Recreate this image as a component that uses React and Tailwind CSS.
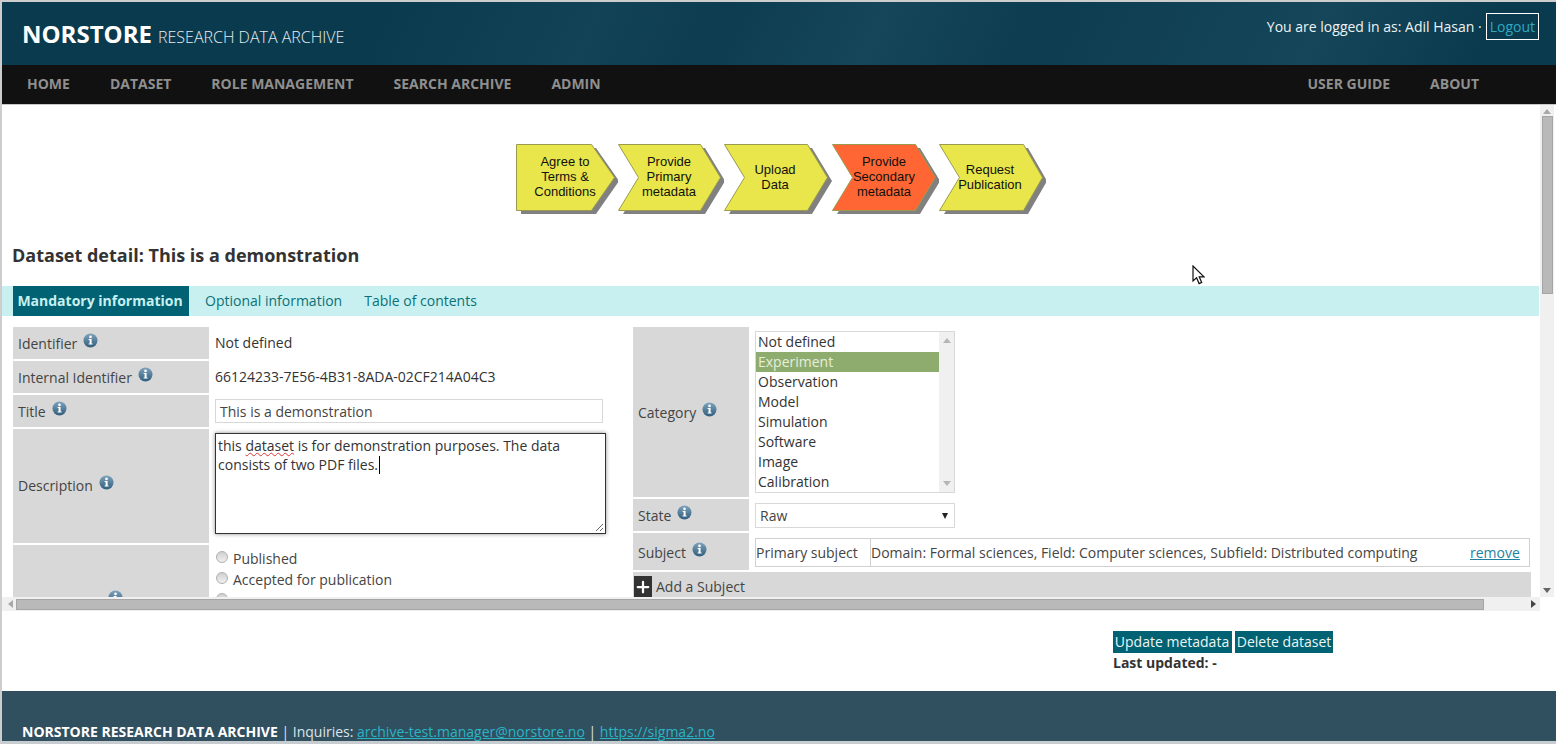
import { Plus } from "lucide-react";

const steps = [
  { lines: ["Agree to", "Terms &", "Conditions"], color: "#e8e64a", points: "0,0 75,0 98,33 75,66 0,66", w: 102, pad: "pr-[4px]" },
  { lines: ["Provide", "Primary", "metadata"], color: "#e8e64a", points: "0,0 82,0 102,33 82,66 0,66 20,33", w: 106, pad: "pr-[4px]" },
  { lines: ["Upload", "Data"], color: "#e8e64a", points: "0,0 83,0 103,33 83,66 0,66 20,33", w: 108, pad: "pr-[6px]" },
  { lines: ["Provide", "Secondary", "metadata"], color: "#ff6633", points: "0,0 83,0 103,33 83,66 0,66 20,33", w: 107, pad: "pr-[3px]" },
  { lines: ["Request", "Publication"], color: "#e8e64a", points: "0,0 84,0 103,33 84,66 0,66 20,33", w: 107, pad: "pr-[5px]" },
];

const categories = ["Not defined", "Experiment", "Observation", "Model", "Simulation", "Software", "Image", "Calibration"];

function InfoIcon() {
  return (
    <svg width="15" height="15" viewBox="0 0 15 15" className="ml-[6px] shrink-0 -translate-y-[3px]">
      <defs>
        <linearGradient id="infoFill" x1="0" y1="0" x2="0" y2="1">
          <stop offset="0" stopColor="#7fa3bd" />
          <stop offset="1" stopColor="#2f5d7c" />
        </linearGradient>
      </defs>
      <circle cx="7.5" cy="7.5" r="7" fill="url(#infoFill)" />
      <circle cx="7.5" cy="3.9" r="1.3" fill="#fff" />
      <path d="M5.6 6h3v4.4h1v1.1H5.6v-1.1h1V7.1h-1z" fill="#fff" />
    </svg>
  );
}

function Label({ children, className }) {
  return (
    <div className={`flex items-center bg-[#d8d8d8] pl-[5px] text-[#444] ${className}`}>
      {children}
      <InfoIcon />
    </div>
  );
}

function Radio({ label }) {
  return (
    <div className="flex h-[21px] items-center">
      <span className="mb-[3px] ml-[2px] h-[12px] w-[12px] rounded-full border border-[#b0b0b0] bg-[linear-gradient(#d0d0d0,#f0f0f0)]" />
      <span className="ml-[5px] text-[#444]">{label}</span>
    </div>
  );
}

function Step({ step }) {
  return (
    <div className="relative h-[70px]" style={{ width: step.w }}>
      <svg width={step.w} height="70" className="absolute left-0 top-0">
        <polygon points={step.points} transform="translate(5 4)" fill="#808080" />
        <polygon points={step.points} transform="translate(0.5 0.5)" fill={step.color} stroke="#9a9a50" strokeWidth="1" />
      </svg>
      <div className={`relative flex h-[66px] flex-col items-center justify-center pt-[1px] text-center font-['Liberation_Sans',sans-serif] text-[13px] leading-[14.8px] text-[#111] ${step.pad}`}>
        {step.lines.map((line) => (
          <span key={line}>{line}</span>
        ))}
      </div>
    </div>
  );
}

function LeftColumn() {
  return (
    <div className="flex w-[600px] flex-col gap-[2px]">
      <div className="flex">
        <Label className="h-[32px] w-[196px]">Identifier</Label>
        <div className="flex items-center pb-[2px] pl-[6px] text-[#333]">Not defined</div>
      </div>
      <div className="flex">
        <Label className="h-[32px] w-[196px]">Internal Identifier</Label>
        <div className="flex items-center pb-[2px] pl-[6px] text-[#333]">66124233-7E56-4B31-8ADA-02CF214A04C3</div>
      </div>
      <div className="flex">
        <Label className="h-[32px] w-[196px]">Title</Label>
        <div className="flex items-center pl-[6px]">
          <div className="flex h-[24px] w-[388px] items-center border border-[#d8d8d8] pl-[4px] text-[#444]">This is a demonstration</div>
        </div>
      </div>
      <div className="flex">
        <Label className="h-[114px] w-[196px] pb-[2px]">Description</Label>
        <div className="pl-[6px] pt-[4px]">
          <div className="relative h-[101px] w-[391px] border border-[#333] pl-[2px] pt-[2px] leading-[19px] text-[#333] shadow-[0_0_4px_rgba(0,0,0,0.45)]">
            this <span className="underline decoration-[#d33] decoration-wavy decoration-1">dataset</span> is for demonstration purposes. The data
            <br />
            consists of two PDF files.<span className="ml-[1px] inline-block h-[18px] w-px bg-black align-text-bottom" />
            <svg width="9" height="9" viewBox="0 0 9 9" className="absolute bottom-[1px] right-[1px]">
              <path d="M1 8 8 1M5 8l3-3" stroke="#666" strokeWidth="1" />
            </svg>
          </div>
        </div>
      </div>
      <div className="flex">
        <Label className="h-[110px] w-[196px]">
          <span className="mr-[2px] translate-y-[2px]">Review state</span>
        </Label>
        <div className="pl-[1px] pt-[3px]">
          <div className="pl-[4px]">
            <Radio label="Published" />
            <Radio label="Accepted for publication" />
            <Radio label="" />
          </div>
        </div>
      </div>
    </div>
  );
}

function RightColumn() {
  return (
    <div className="ml-[20px] flex w-[898px] flex-col gap-[2px]">
      <div className="flex">
        <Label className="h-[170px] w-[116px]">Category</Label>
        <div className="pl-[6px] pt-[4px]">
          <div className="flex h-[162px] w-[200px] border border-[#d8d8d8]">
            <div className="w-[183px]">
              {categories.map((item) => (
                <div key={item} className={`h-[20px] pl-[2px] leading-[20px] ${item === "Experiment" ? "bg-[#8fac6f] text-[#e6eedb]" : "text-[#333]"}`}>
                  {item}
                </div>
              ))}
            </div>
            <div className="flex flex-1 flex-col items-center justify-between bg-[#f0f0f0] py-[6px]">
              <span className="border-x-[4px] border-b-[5px] border-x-transparent border-b-[#b5b5b5]" />
              <span className="border-x-[4px] border-t-[5px] border-x-transparent border-t-[#b5b5b5]" />
            </div>
          </div>
        </div>
      </div>
      <div className="flex">
        <Label className="h-[32px] w-[116px]">State</Label>
        <div className="pl-[6px] pt-[4px]">
          <div className="flex h-[25px] w-[200px] items-center justify-between border border-[#d8d8d8] pl-[4px] pr-[6px] text-[#444]">
            Raw
            <span className="border-x-[3px] border-t-[6px] border-x-transparent border-t-[#222]" />
          </div>
        </div>
      </div>
      <div className="flex">
        <Label className="h-[37px] w-[116px] pt-[1px]">Subject</Label>
        <div className="pl-[6px] pt-[5px]">
          <div className="flex h-[29px] w-[775px] items-center border border-[#d0d0d0] text-[#444]">
            <div className="flex h-full w-[115px] items-center border-r border-[#d0d0d0]">Primary subject</div>
            <div className="flex-1">Domain: Formal sciences, Field: Computer sciences, Subfield: Distributed computing</div>
            <div className="w-[59px] text-[#1f7f9f] underline">remove</div>
          </div>
        </div>
      </div>
      <div className="flex h-[40px] w-[898px] items-start bg-[#d8d8d8] pl-[1px] pt-[4px] text-[#444]">
        <span className="flex h-[21px] w-[18px] items-center justify-center bg-[#333]">
          <Plus size={18} strokeWidth={3} color="#fff" />
        </span>
        <span className="ml-[4px]">Add a Subject</span>
      </div>
    </div>
  );
}

function VerticalBar() {
  return (
    <div className="flex h-[492px] w-[14px] flex-col items-center bg-[#f0f0f0]">
      <span className="mt-[4px] border-x-[4px] border-b-[5px] border-x-transparent border-b-[#a8a8a8]" />
      <div className="mt-[2px] h-[178px] w-[11px] border border-[#a5a5a5] bg-[#b9b9b9]" />
      <span className="mt-auto mb-[4px] border-x-[4px] border-t-[5px] border-x-transparent border-t-[#666]" />
    </div>
  );
}

function HorizontalBar() {
  return (
    <div className="flex h-[14px] w-[1538px] items-center bg-[#f0f0f0] pl-[6px]">
      <span className="border-y-[4px] border-r-[5px] border-y-transparent border-r-[#a8a8a8]" />
      <div className="ml-[3px] h-[11px] w-[1468px] border border-[#a5a5a5] bg-[#b9b9b9]" />
      <span className="ml-[47px] border-y-[4px] border-l-[5px] border-y-transparent border-l-[#444]" />
    </div>
  );
}

export default function App() {
  return (
    <div className="relative flex h-[744px] w-[1556px] flex-col overflow-hidden border-l-2 border-t-2 border-[#cdcdcd] bg-white font-['Open_Sans',sans-serif] text-[14px]">
      <header className="flex h-[63px] shrink-0 items-start justify-between bg-[#0a3a4e] bg-[linear-gradient(115deg,rgba(255,255,255,0)_0%,rgba(255,255,255,0)_24%,rgba(90,140,155,0.1)_38%,rgba(255,255,255,0.01)_46%,rgba(90,140,155,0.14)_56%,rgba(255,255,255,0.01)_66%,rgba(90,140,155,0.14)_84%,rgba(255,255,255,0)_95%)] pl-[20px]">
        <div className="mt-[14px] flex items-baseline">
          <span className="text-[24px] font-bold text-white">NORSTORE</span>
          <span className="ml-[6px] text-[16px] font-light text-[#e6eef0]">RESEARCH DATA ARCHIVE</span>
        </div>
        <div className="mr-[17px] mt-[11px] flex items-center text-[#eef3f4]">
          <span>You are logged in as: Adil Hasan ·</span>
          <span className="ml-[4px] flex h-[27px] items-center border border-white px-[3px] text-[#2fa9c0]">Logout</span>
        </div>
      </header>

      <nav className="flex h-[39px] shrink-0 items-center justify-between bg-[#111] pb-[2px] pl-[25px] pr-[77px] text-[14px] font-bold text-[#8f8f8f]">
        <div className="flex gap-[40px]">
          <span>HOME</span>
          <span>DATASET</span>
          <span>ROLE MANAGEMENT</span>
          <span>SEARCH ARCHIVE</span>
          <span>ADMIN</span>
        </div>
        <div className="flex gap-[40px]">
          <span>USER GUIDE</span>
          <span>ABOUT</span>
        </div>
      </nav>

      <div className="h-px shrink-0 bg-[#c8c8c8]" />

      <div className="flex shrink-0">
        <div className="h-[492px] w-[1538px] overflow-hidden">
          <div className="flex justify-start pl-[514px] pt-[39px]">
            {steps.map((step) => (
              <Step key={step.lines.join()} step={step} />
            ))}
          </div>
          <h1 className="mt-[29px] pl-[10px] text-[18px] font-bold leading-[24px] text-[#333]">Dataset detail: This is a demonstration</h1>
          <div className="mr-[1px] mt-[19px] flex h-[30px] items-stretch bg-[#c8f0f0] pl-[11px] text-[#0b7077]">
            <span className="flex w-[176px] items-center justify-center bg-[#006272] pb-[2px] pr-[2px] font-bold text-[#c8f0f0]">Mandatory information</span>
            <span className="ml-[16px] flex items-center pb-[2px]">Optional information</span>
            <span className="ml-[22px] flex items-center pb-[2px]">Table of contents</span>
          </div>
          <div className="mt-[11px] flex pl-[11px]">
            <LeftColumn />
            <RightColumn />
          </div>
        </div>
        <VerticalBar />
      </div>

      <HorizontalBar />

      <div className="h-[80px] shrink-0 pl-[1111px] pt-[20px]">
        <div className="flex gap-[3px] text-[#eef5f5]">
          <span className="flex h-[22px] w-[119px] items-center justify-center bg-[#006272] pb-[2px] pr-[1px]">Update metadata</span>
          <span className="flex h-[22px] w-[98px] items-center justify-center bg-[#006272] pb-[2px]">Delete dataset</span>
        </div>
        <div className="font-bold leading-[20px] text-[#333]">Last updated: -</div>
      </div>

      <footer className="flex h-[50px] shrink-0 items-end bg-[#304f5f] pl-[20px] text-[#dde4e8]">
        <span className="leading-[19px]">
          <span className="font-bold text-white">NORSTORE RESEARCH DATA ARCHIVE</span> | Inquiries:{" "}
          <span className="text-[#2ab5c5] underline">archive-test.manager@norstore.no</span> |{" "}
          <span className="text-[#2ab5c5] underline">https://sigma2.no</span>
        </span>
      </footer>
      <div className="flex-1 bg-[#c6ccd0]" />

      <svg width="13" height="20" viewBox="0 0 13 20" className="absolute left-[1190px] top-[263px]">
        <path d="M1 1v15l3.6-3.2 2.5 5.8 2.6-1.2-2.5-5.6h4.8z" fill="#fff" stroke="#111" strokeWidth="1.2" />
      </svg>
    </div>
  );
}
